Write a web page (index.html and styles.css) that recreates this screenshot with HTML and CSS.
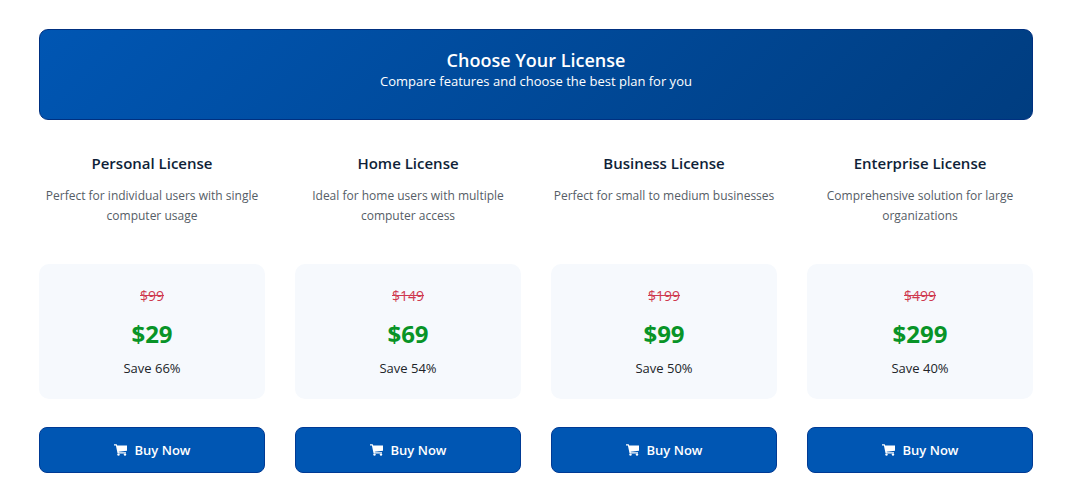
FILE: index.html
```html
<!DOCTYPE html>
<html lang="en">
  <head>
    <meta charset="UTF-8" />
    <meta name="viewport" content="width=device-width, initial-scale=1.0" />
    <title>Choose Your License</title>
    <link rel="stylesheet" href="styles.css">
  </head>
  <body>
    <svg class="sprite" aria-hidden="true">
      <symbol id="cart" viewBox="0 0 13 12">
        <path d="M0 .3h2.700l.5 1.200H13V6.800L4.700 7.800l.1.500H12v1.200H3.600L1.900 1.600H0z" />
        <circle cx="4.500" cy="10.600" r="1.200" />
        <circle cx="11" cy="10.600" r="1.200" />
      </symbol>
    </svg>

    <main class="pricing">
      <header class="pricing-header">
        <h1>Choose Your License</h1>
        <p>Compare features and choose the best plan for you</p>
      </header>

      <div class="plans">
        <section class="plan">
          <h2>Personal License</h2>
          <p class="description">Perfect for individual users with single computer usage</p>
          <div class="price-box">
            <del class="old-price">$99</del>
            <strong class="price">$29</strong>
            <span class="save">Save 66%</span>
          </div>
          <button class="buy" type="button"><svg class="cart" aria-hidden="true"><use href="#cart" /></svg>Buy Now</button>
        </section>

        <section class="plan">
          <h2>Home License</h2>
          <p class="description">Ideal for home users with multiple computer access</p>
          <div class="price-box">
            <del class="old-price">$149</del>
            <strong class="price">$69</strong>
            <span class="save">Save 54%</span>
          </div>
          <button class="buy" type="button"><svg class="cart" aria-hidden="true"><use href="#cart" /></svg>Buy Now</button>
        </section>

        <section class="plan">
          <h2>Business License</h2>
          <p class="description">Perfect for small to medium businesses</p>
          <div class="price-box">
            <del class="old-price">$199</del>
            <strong class="price">$99</strong>
            <span class="save">Save 50%</span>
          </div>
          <button class="buy" type="button"><svg class="cart" aria-hidden="true"><use href="#cart" /></svg>Buy Now</button>
        </section>

        <section class="plan">
          <h2>Enterprise License</h2>
          <p class="description">Comprehensive solution for large organizations</p>
          <div class="price-box">
            <del class="old-price">$499</del>
            <strong class="price">$299</strong>
            <span class="save">Save 40%</span>
          </div>
          <button class="buy" type="button"><svg class="cart" aria-hidden="true"><use href="#cart" /></svg>Buy Now</button>
        </section>
      </div>
    </main>
  </body>
</html>
```

FILE: styles.css
```css
* {
  margin: 0;
  padding: 0;
  box-sizing: border-box;
}

body {
  background-color: #fff;
  color: #212529;
  font-family: "Segoe UI", "Open Sans", "Noto Sans", sans-serif;
  font-size: 13px;
}

.sprite {
  display: none;
}

.pricing {
  padding: 29px 37px 25px 39px;
}

.pricing-header {
  padding: 19px 20px 28px;
  border: 1px solid #003080;
  border-radius: 9px;
  background: linear-gradient(135deg, #0056b3, #003d80) border-box;
  color: #fff;
  text-align: center;
}

.pricing-header h1 {
  font-size: 18px;
  font-weight: 600;
  line-height: 22px;
}

.pricing-header p {
  line-height: 20px;
}

.plans {
  display: grid;
  grid-template-columns: repeat(4, 1fr);
  gap: 30px;
  margin-top: 32px;
}

.plan {
  display: flex;
  flex-direction: column;
  text-align: center;
}

.plan h2 {
  margin-bottom: 12px;
  color: #0f1f38;
  font-size: 15px;
  font-weight: 600;
  line-height: 22px;
}

.description {
  flex: 1;
  margin-bottom: 38px;
  color: #555d66;
  font-size: 12px;
  line-height: 20px;
}

.price-box {
  display: flex;
  flex-direction: column;
  align-items: center;
  padding: 20px;
  border-radius: 10px;
  background-color: #f6f9fd;
}

.old-price {
  margin-bottom: 8px;
  color: #cf3a50;
  font-size: 14px;
  line-height: 24px;
}

.price {
  margin-bottom: 5px;
  color: #089427;
  font-size: 24px;
  font-weight: 700;
  line-height: 36px;
}

.save {
  line-height: 22px;
}

.buy {
  display: flex;
  align-items: center;
  justify-content: center;
  gap: 8px;
  margin-top: 28px;
  padding: 11px;
  border: 1px solid #003a94;
  border-radius: 8px;
  background-color: #0056b3;
  color: #fff;
  font-family: inherit;
  font-size: 13px;
  font-weight: 600;
  line-height: 22px;
  cursor: pointer;
}

.buy:hover {
  background-color: #004a9c;
}

.cart {
  width: 13px;
  height: 12px;
  fill: #fff;
}
```
